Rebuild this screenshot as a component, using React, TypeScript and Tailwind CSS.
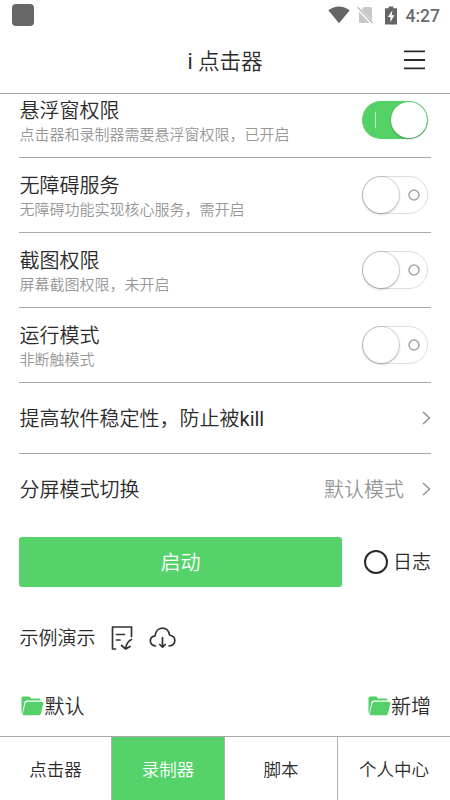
import React from "react";

const permissions = [
  { title: "悬浮窗权限", desc: "点击器和录制器需要悬浮窗权限，已开启", on: true },
  { title: "无障碍服务", desc: "无障碍功能实现核心服务，需开启", on: false },
  { title: "截图权限", desc: "屏幕截图权限，未开启", on: false },
  { title: "运行模式", desc: "非断触模式", on: false },
];

const StatusBar = () => (
  <div className="h-[30px] flex items-center justify-between pl-3 pr-[10px] shrink-0">
    <div className="w-[22px] h-[22px] rounded-[4px] bg-[#676767]" />
    <div className="flex items-center">
      <svg className="w-[22px] h-[18px]" viewBox="0 0 22 18">
        <path d="M0.3 4.2C6.8-0.9 15.2-0.9 21.7 4.2L11 17.2Z" fill="#656565" />
      </svg>
      <svg className="w-[17px] h-[18px] ml-[7px]" viewBox="0 0 17 18">
        <path d="M7 1H13.5Q15 1 15 2.5V17H3.5Q2 17 2 15.5V6Z" fill="#c8c8c8" />
        <path d="M0 1.3L15.6 17.8" stroke="#fff" strokeWidth="3" />
        <path d="M0.6 1.3L15.6 17" stroke="#bdbdbd" strokeWidth="1.4" />
      </svg>
      <svg className="w-3 h-[19px] ml-[11px]" viewBox="0 0 12 19">
        <path d="M3.7 0.5H8.3V2.3H12V18.5H0V2.3H3.7Z" fill="#656565" />
        <path d="M7.3 4.5L2.8 11H5.4V16L9.4 9.3H6.8Z" fill="#fff" />
      </svg>
      <span className="ml-[9px] pt-[3px] font-['Roboto'] font-medium text-[17.5px] leading-none text-[#6b6b6b]">4:27</span>
    </div>
  </div>
);

const Header = () => (
  <header className="h-16 grid grid-cols-3 items-center border-b border-[#ababab] px-6 shrink-0">
    <div />
    <h1 className="text-center text-[21.5px] leading-8 whitespace-nowrap pt-[1px]">
      <span className="font-normal">i</span> 点击器
    </h1>
    <svg className="w-[21px] h-5 ml-auto mr-[1px] -mt-[3px]" viewBox="0 0 21 20">
      <path d="M0 1.4H21M0 10H21M0 18.4H21" stroke="#2a2a2a" strokeWidth="1.9" />
    </svg>
  </header>
);

const Toggle = ({ on }: { on: boolean }) =>
  on ? (
    <div className="w-[66px] h-[38px] rounded-full bg-[#53d165] flex items-center justify-between pl-[13px] pr-[1px]">
      <div className="w-[1px] h-4 bg-[#c3f0c9]" />
      <div className="w-[36px] h-[36px] rounded-full bg-white shadow-[0_1px_2px_rgba(0,0,0,0.3)]" />
    </div>
  ) : (
    <div className="w-[66px] h-[38px] rounded-full border border-[#dedede] flex items-center justify-between pr-[7px]">
      <div className="w-[36px] h-[36px] rounded-full bg-white shadow-[0_0_0_1px_rgba(0,0,0,0.12),0_1px_3px_rgba(0,0,0,0.25)]" />
      <svg className="w-3 h-3" viewBox="0 0 12 12">
        <circle cx="6" cy="6" r="5" fill="none" stroke="#a5a5a5" strokeWidth="1.5" />
      </svg>
    </div>
  );

const Chevron = () => (
  <svg className="w-[9px] h-[14px]" viewBox="0 0 9 14" fill="none">
    <path d="M1 1L7.6 7L1 13" stroke="#8a8a8a" strokeWidth="1.3" />
  </svg>
);

const FolderIcon = () => (
  <svg className="w-[23px] h-5" viewBox="0 0 23 20" fill="#53d069">
    <path d="M0.5 17V2Q0.5 0.5 2 0.5H7.7Q9 0.5 9.4 1.7L9.8 2.6H18Q19.5 2.6 19.5 4.5H5.8Q4 4.5 3.5 6.2L1.2 17.5Z" />
    <path d="M6.4 5.8H21Q22.7 5.8 22.3 7.4L20 17.6Q19.6 19.3 18 19.3H2.8Q1.4 19.3 1.8 17.8L4.3 7.5Q4.8 5.8 6.4 5.8Z" />
  </svg>
);

const App = () => {
  return (
    <div className="w-[450px] h-[800px] bg-white overflow-hidden flex flex-col text-[#2b2b2b] font-[350] font-['Roboto','Noto_Sans_CJK_SC',sans-serif]">
      <StatusBar />
      <Header />

      <main className="flex-1 min-h-0 overflow-hidden px-[19px]">
        {/* Permission switches, first row is partly scrolled away */}
        <div className="-mt-[11px]">
          {permissions.map((item) => (
            <div key={item.title} className="h-[75px] flex items-center justify-between border-b border-[#ababab] pr-[3px]">
              <div className="pt-[3px] pl-[0.5px]">
                <div className="text-[20px] leading-[26px]">{item.title}</div>
                <div className="text-[15px] leading-[22px] text-[#979797]">{item.desc}</div>
              </div>
              <Toggle on={item.on} />
            </div>
          ))}
        </div>

        {/* Links */}
        <div className="h-[71px] flex items-center justify-between border-b border-[#ababab] text-[20px]">
          <span className="pt-[2px] pl-[0.5px]">
            提高软件稳定性，防止被<span className="font-normal">kill</span>
          </span>
          <Chevron />
        </div>
        <div className="h-[70px] flex items-center text-[20px]">
          <span className="pt-[2px] pl-[0.5px]">分屏模式切换</span>
          <span className="ml-auto mr-[18px] pt-[2px] text-[#979797]">默认模式</span>
          <Chevron />
        </div>

        {/* Start button */}
        <div className="mt-[13px] h-[50px] flex items-center">
          <button className="w-[323px] h-[50px] rounded-[3px] bg-[#56d26b] text-white text-[20px] pt-[2px]">启动</button>
          <div className="ml-[22px] w-6 h-6 rounded-full border-2 border-[#2b2b2b]" />
          <span className="ml-[5px] pt-[3px] text-[19px] whitespace-nowrap">日志</span>
        </div>

        {/* Examples */}
        <div className="mt-[35px] h-8 flex items-center">
          <span className="text-[19px] pt-[3px] pl-[0.5px]">示例演示</span>
          <svg className="w-[23px] h-[26px] ml-[15.5px]" viewBox="0 0 23 26" fill="none" stroke="#333" strokeWidth="1.7" strokeLinecap="round" strokeLinejoin="round">
            <path d="M4.5 24H1.5V2H20.5V11.5M5.5 9.5H13.5M5.5 15H9M20.5 14.5Q15.5 16.5 14.7 23.7M10.5 20.5L14.7 24L19 21.5" />
          </svg>
          <svg className="w-[27px] h-[22px] ml-[15px]" viewBox="0 0 27 22" fill="none" stroke="#333" strokeWidth="1.7" strokeLinecap="round" strokeLinejoin="round">
            <path d="M6.5 19C-0.2 18 -0.4 9.8 6 8.8C7.2-1.2 19.3-1.5 20.5 8C27.8 9.5 27.6 18.2 20 19M13.5 10.5V20M10.8 17.5L13.5 20.2L16.2 17.5" />
          </svg>
        </div>

        {/* Folders */}
        <div className="mt-[36px] h-8 flex items-center justify-between text-[20px] pl-[1.5px]">
          <div className="flex items-center gap-[1px]">
            <FolderIcon />
            <span className="pt-[2px]">默认</span>
          </div>
          <div className="flex items-center">
            <FolderIcon />
            <span className="pt-[2px]">新增</span>
          </div>
        </div>
      </main>

      {/* Tabs */}
      <nav className="h-16 grid grid-cols-[112px_113px_113px_1fr] border-t border-[#a8a8a8] text-[17.5px] text-center leading-[66px] shrink-0">
        <div className="border-r border-[#b0b0b0]">点击器</div>
        <div className="bg-[#56d26b] text-white border-r border-[#b0b0b0]">录制器</div>
        <div className="border-r border-[#b0b0b0]">脚本</div>
        <div>个人中心</div>
      </nav>
    </div>
  );
};

export default App;
